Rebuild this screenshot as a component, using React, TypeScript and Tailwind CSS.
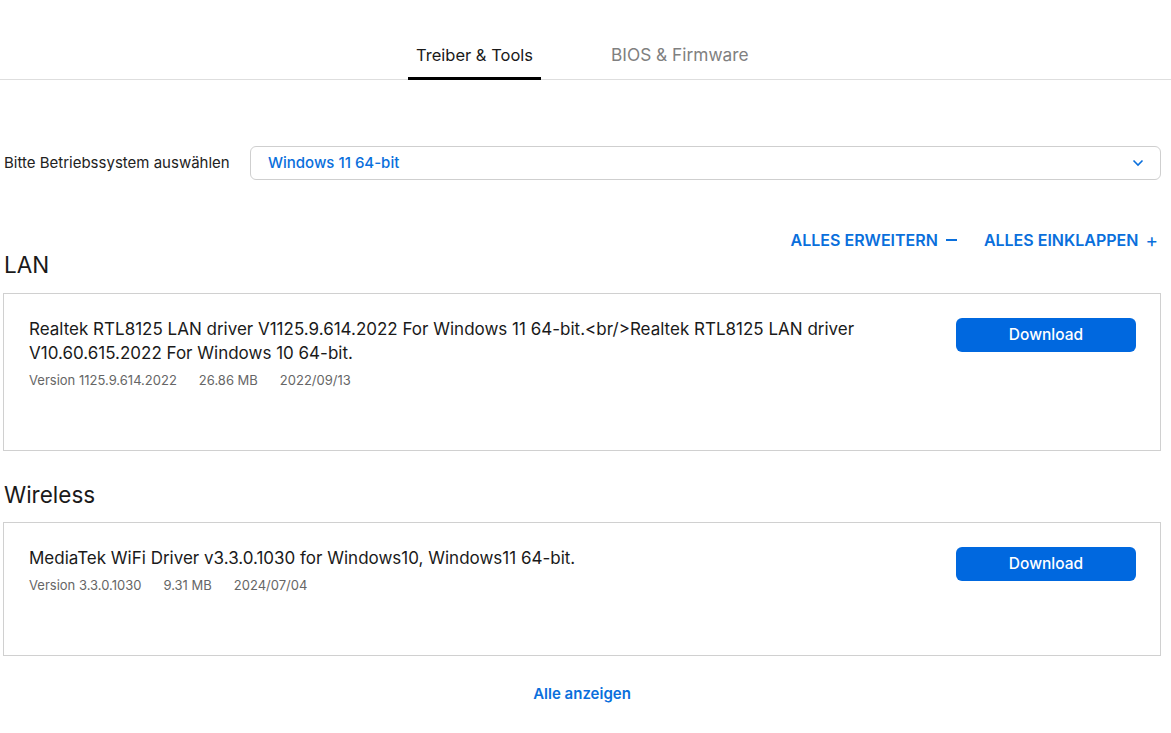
import React from "react";

const font = { fontFamily: "Inter, 'Noto Sans', sans-serif" };

function Card({ title, version, size, date }: { title: React.ReactNode; version: string; size: string; date: string }) {
  return (
    <div className="border border-[#d0d0d0] flex justify-between pl-[25px] pr-[24px] pt-[22px] pb-[60px]">
      <div className="flex-1">
        <div className="text-[17px] leading-[24px] text-[#1a1a1a] max-w-[860px] pt-px">{title}</div>
        <div className="flex gap-[22px] text-[13px] leading-[20px] text-[#666] mt-[5px]">
          <span>{version}</span>
          <span>{size}</span>
          <span>{date}</span>
        </div>
      </div>
      <div className="pt-[2px]">
        <button className="w-[180px] h-[34px] rounded-[6px] bg-[#0068df] text-white text-[15.5px] font-medium">Download</button>
      </div>
    </div>
  );
}

export default function App() {
  return (
    <div className="bg-white min-h-[733px] w-[1171px]" style={font}>
      <div className="border-b border-[#dedede] flex pl-[408px] pt-[43px] w-[1171px]">
        <div className="w-[133px] text-center pb-[10px] border-b-[3px] border-black text-[16.5px] leading-[24px] text-[#1a1a1a] -mb-px">Treiber &amp; Tools</div>
        <div className="ml-[70px] text-[17.3px] leading-[24px] text-[#808080]">BIOS &amp; Firmware</div>
      </div>
      <div className="ml-[3px] w-[1158px]">
        <div className="flex items-center mt-[66px]">
          <div className="w-[247px] pl-px text-[15px] text-[#222]">Bitte Betriebssystem auswählen</div>
          <div className="flex-1 h-[34px] border border-[#cfcfcf] rounded-[6px] flex items-center justify-between pl-[17px] pr-[16px]">
            <span className="text-[15px] text-[#0a6fdc] font-medium">Windows 11 64-bit</span>
            <svg width="12" height="8" viewBox="0 0 12 8" fill="none"><path d="M1.5 1.5 6 6l4.5-4.5" stroke="#0a6fdc" strokeWidth="1.6" /></svg>
          </div>
        </div>
        <div className="flex justify-end gap-[27px] mt-[50px] pr-[3px] text-[16px] leading-[20px] font-semibold text-[#0a6fdc]">
          <span className="flex items-center gap-[8px]">ALLES ERWEITERN <span className="inline-block w-[11px] h-[1.5px] bg-[#0a6fdc]"></span></span>
          <span className="flex items-center gap-[7px]">ALLES EINKLAPPEN <span className="font-normal text-[19px] leading-none">+</span></span>
        </div>
        <div className="text-[22.5px] text-[#1a1a1a] leading-[30px] ml-px">LAN</div>
        <div className="mt-[13px]">
          <Card
            title="Realtek RTL8125 LAN driver V1125.9.614.2022 For Windows 11 64-bit.<br/>Realtek RTL8125 LAN driver V10.60.615.2022 For Windows 10 64-bit."
            version="Version 1125.9.614.2022"
            size="26.86 MB"
            date="2022/09/13"
          />
        </div>
        <div className="text-[22.5px] text-[#1a1a1a] leading-[30px] mt-[29px] ml-px">Wireless</div>
        <div className="mt-[12px]">
          <Card
            title="MediaTek WiFi Driver v3.3.0.1030 for Windows10, Windows11 64-bit."
            version="Version 3.3.0.1030"
            size="9.31 MB"
            date="2024/07/04"
          />
        </div>
        <div className="text-center mt-[28px] text-[15px] leading-[20px] font-semibold text-[#0a6fdc]">Alle anzeigen</div>
      </div>
    </div>
  );
}
